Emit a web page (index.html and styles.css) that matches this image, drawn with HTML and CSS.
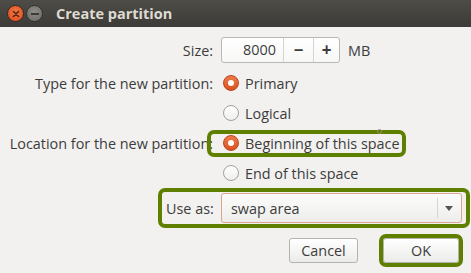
FILE: index.html
```html
<!DOCTYPE html>
<html lang="en">
<head>
	<meta charset="UTF-8">
	<title>Create partition</title>
	<link rel="stylesheet" href="styles.css">
</head>
<body>
	<div class="window">
		<div class="titlebar">
			<span class="wbtn wbtn-close">
				<svg width="8" height="8" viewBox="0 0 8 8"><path d="M1.5 1.5L6.5 6.5M6.5 1.5L1.5 6.5" stroke="#5a2310" stroke-width="1.6" stroke-linecap="round"/></svg>
			</span>
			<span class="wbtn wbtn-min"><span class="min-bar"></span></span>
			<span class="title">Create partition</span>
		</div>
		<div class="content">
			<div class="row row-size">
				<span class="lbl">Size:</span>
				<div class="field">
					<div class="spin">
						<span class="spin-val">8000</span>
						<span class="spin-btn">&minus;</span>
						<span class="spin-btn spin-plus">+</span>
					</div>
					<span class="unit">MB</span>
				</div>
			</div>
			<div class="row">
				<span class="lbl">Type for the new partition:</span>
				<div class="field"><span class="radio radio-on"></span>Primary</div>
			</div>
			<div class="row">
				<span class="lbl"></span>
				<div class="field"><span class="radio"></span>Logical</div>
			</div>
			<div class="row">
				<span class="lbl">Location for the new partition:</span>
				<div class="field">
					<div class="opt marked"><span class="radio radio-on"></span>Beginning of this space</div>
					<span class="dot-mark"></span>
				</div>
			</div>
			<div class="row">
				<span class="lbl"></span>
				<div class="field"><span class="radio"></span>End of this space</div>
			</div>
			<div class="use-wrap">
				<div class="use-row marked">
					<span class="use-lbl">Use as:</span>
					<div class="combo">
						<span class="combo-val">swap area</span>
						<span class="combo-arrow"></span>
					</div>
				</div>
			</div>
			<div class="actions">
				<div class="btn">Cancel</div>
				<div class="btn btn-ok marked">OK</div>
			</div>
		</div>
	</div>
</body>
</html>
```

FILE: styles.css
```css
*{margin: 0;padding: 0;box-sizing: border-box;}
body{
	width: 471px;
	height: 273px;
	overflow: hidden;
	background-color: #f2f1f0;
	font-family: "Open Sans", "Noto Sans", sans-serif;
	font-size: 14.4px;
	color: #3c3c3c;
}
.titlebar{
	height: 27px;
	display: flex;
	align-items: center;
	padding-left: 7px;
	background: linear-gradient(#4d4c47, #3c3b37);
}
.wbtn{
	width: 17px;
	height: 17px;
	border-radius: 50%;
	display: flex;
	align-items: center;
	justify-content: center;
	margin-right: 2px;
}
.wbtn-close{
	background: radial-gradient(circle at 50% 40%, #f07746, #df4a1b);
	border: 1px solid #3a2a22;
}
.wbtn-min{
	background: radial-gradient(circle at 50% 40%, #8d8c86, #6b6a65);
	border: 1px solid #33322e;
}
.min-bar{
	width: 8px;
	height: 2px;
	background-color: #3c3b37;
}
.title{
	margin-left: 11px;
	font-size: 14.5px;
	font-weight: bold;
	color: #dfdbd2;
}
.content{
	padding-top: 8px;
	position: relative;
}
/*表单行*/
.row{
	display: grid;
	grid-template-columns: 213px 1fr;
	column-gap: 7px;
	height: 30px;
	align-items: center;
}
.row-size{
	margin-bottom: 3px;
}
.lbl{
	text-align: right;
	white-space: nowrap;
}
.field{
	display: flex;
	align-items: center;
	position: relative;
}
.spin{
	display: flex;
	width: 119px;
	height: 26px;
	border: 1px solid #b9b8b3;
	border-radius: 3px;
	background: linear-gradient(#ffffff, #f7f7f6);
	margin-left: 1px;
}
.spin-val{
	width: 61px;
	text-align: right;
	padding-right: 7px;
	line-height: 24px;
}
.spin-btn{
	width: 30px;
	border-left: 1px solid #d6d5d1;
	text-align: center;
	line-height: 23px;
	font-size: 17px;
	font-weight: bold;
}
.spin-plus{
	width: 26px;
}
.unit{
	margin-left: 8px;
}
.radio{
	width: 16px;
	height: 16px;
	flex: none;
	border-radius: 50%;
	border: 1px solid #a3a29d;
	background: linear-gradient(#ffffff, #efefee);
	margin: 0 6px 0 3px;
	position: relative;
}
.radio-on{
	border-color: #b8451d;
	background: linear-gradient(#ef7a4b, #d9521f);
}
.radio-on::after{
	content: "";
	position: absolute;
	top: 4px;
	left: 4px;
	width: 6px;
	height: 6px;
	border-radius: 50%;
	background-color: #fff;
}
.marked{
	outline: 4px solid #5f7f00;
	border-radius: 3px;
}
.opt{
	display: flex;
	align-items: center;
	height: 19px;
	margin-left: -9px;
	padding-left: 9px;
	width: 191px;
	white-space: nowrap;
}
.dot-mark{
	position: absolute;
	left: 157px;
	top: -5px;
	width: 5px;
	height: 5px;
	border: 1px solid #9a8a70;
	border-radius: 50%;
}
/*用途下拉*/
.use-wrap{
	padding: 4px 0 0 162px;
}
.use-row{
	display: flex;
	align-items: center;
	width: 304px;
	height: 32px;
	padding: 0 4px 0 4px;
	justify-content: space-between;
}
.combo{
	display: flex;
	align-items: center;
	width: 241px;
	height: 30px;
	border: 1px solid #d9a88c;
	border-radius: 3px;
	background: linear-gradient(#fcfcfc, #ededeb);
}
.combo-val{
	flex: 1;
	padding-left: 9px;
}
.combo-arrow{
	width: 24px;
	height: 20px;
	border-left: 1px solid #d6d5d1;
	position: relative;
}
.combo-arrow::after{
	content: "";
	position: absolute;
	top: 8px;
	left: 7px;
	border-left: 4px solid transparent;
	border-right: 4px solid transparent;
	border-top: 5px solid #555;
}
/*按钮*/
.actions{
	display: flex;
	justify-content: flex-end;
	padding: 14px 12px 0 0;
	gap: 25px;
}
.btn{
	width: 69px;
	height: 25px;
	line-height: 23px;
	text-align: center;
	border: 1px solid #b4b3ae;
	border-radius: 3px;
	background: linear-gradient(#ffffff, #ebebe9);
}
.btn-ok{
	width: 76px;
}
```
